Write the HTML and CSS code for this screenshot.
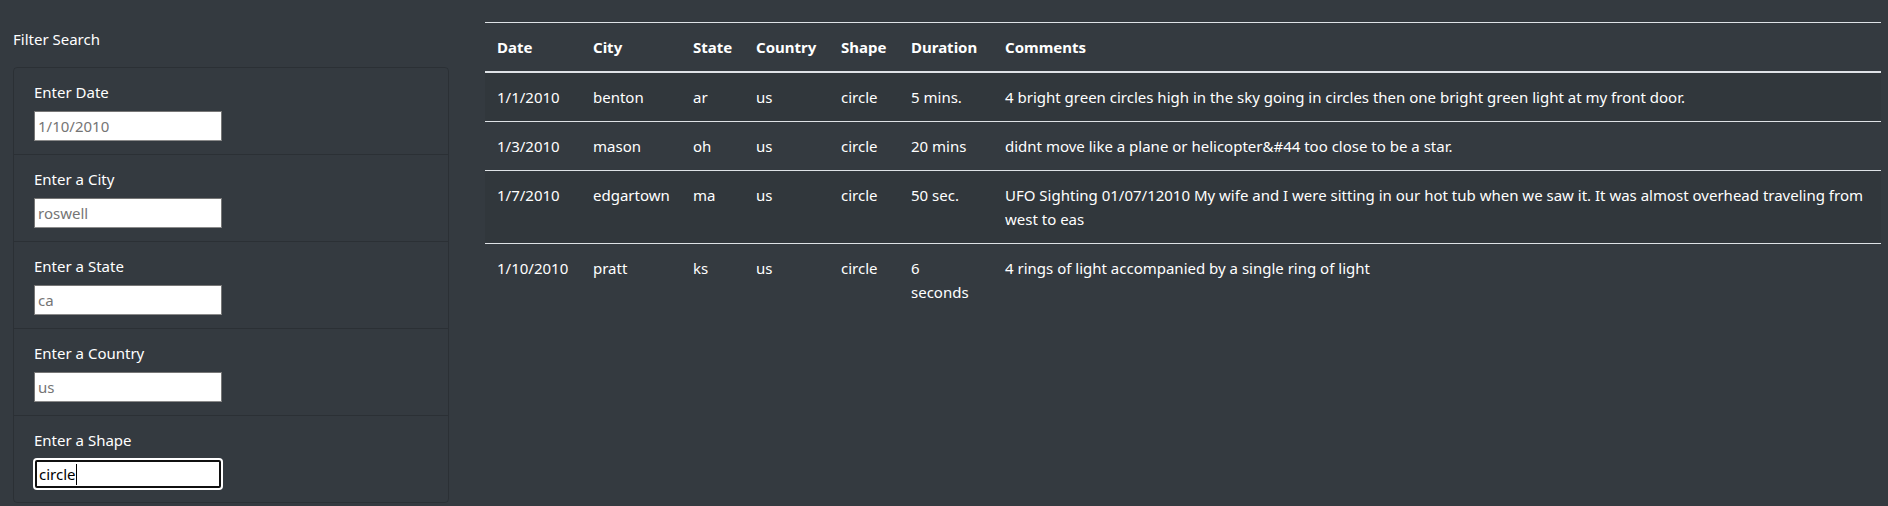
FILE: index.html
```html
<!DOCTYPE html>
<html lang="en">
<head>
<meta charset="utf-8">
<title>UFO Sightings</title>
<link rel="stylesheet" href="styles.css">
</head>
<body>
<div class="page">
  <aside class="filters">
    <p class="filters-title">Filter Search</p>
    <ul class="filter-list">
      <li class="filter-item">
        <label class="filter-label" for="date">Enter Date</label>
        <input class="filter-input" id="date" type="text" placeholder="1/10/2010">
      </li>
      <li class="filter-item">
        <label class="filter-label" for="city">Enter a City</label>
        <input class="filter-input" id="city" type="text" placeholder="roswell">
      </li>
      <li class="filter-item">
        <label class="filter-label" for="state">Enter a State</label>
        <input class="filter-input" id="state" type="text" placeholder="ca">
      </li>
      <li class="filter-item">
        <label class="filter-label" for="country">Enter a Country</label>
        <input class="filter-input" id="country" type="text" placeholder="us">
      </li>
      <li class="filter-item">
        <label class="filter-label" for="shape">Enter a Shape</label>
        <div class="filter-input focused" id="shape"><span>circle</span><span class="caret"></span></div>
      </li>
    </ul>
  </aside>
  <main class="results">
    <table class="ufo-table">
      <colgroup>
        <col class="c-date"><col class="c-city"><col class="c-state"><col class="c-country"><col class="c-shape"><col class="c-duration"><col class="c-comments">
      </colgroup>
      <thead>
        <tr><th>Date</th><th>City</th><th>State</th><th>Country</th><th>Shape</th><th>Duration</th><th>Comments</th></tr>
      </thead>
      <tbody>
        <tr><td>1/1/2010</td><td>benton</td><td>ar</td><td>us</td><td>circle</td><td>5 mins.</td><td>4 bright green circles high in the sky going in circles then one bright green light at my front door.</td></tr>
        <tr><td>1/3/2010</td><td>mason</td><td>oh</td><td>us</td><td>circle</td><td>20 mins</td><td>didnt move like a plane or helicopter&amp;#44 too close to be a star.</td></tr>
        <tr><td>1/7/2010</td><td>edgartown</td><td>ma</td><td>us</td><td>circle</td><td>50 sec.</td><td>UFO Sighting 01/07/12010 My wife and I were sitting in our hot tub when we saw it. It was almost overhead traveling from west to eas</td></tr>
        <tr><td>1/10/2010</td><td>pratt</td><td>ks</td><td>us</td><td>circle</td><td>6 seconds</td><td>4 rings of light accompanied by a single ring of light</td></tr>
      </tbody>
    </table>
  </main>
</div>
</body>
</html>
```
FILE: styles.css
```css
html, body {
  margin: 0;
  padding: 0;
  background: #343a40;
  color: #fff;
  font-family: "Noto Sans", Lato, "Liberation Sans", sans-serif;
  font-size: 15px;
  line-height: 24px;
}

.page {
  display: flex;
  align-items: flex-start;
  gap: 36px;
  padding: 0 7px 0 13px;
  height: 506px;
  overflow: hidden;
}

.filters {
  width: 436px;
  flex: none;
  padding-top: 27px;
}

.filters-title {
  margin: 0 0 16px;
}

.filter-list {
  list-style: none;
  margin: 0;
  padding: 0;
  border: 1px solid rgba(0, 0, 0, 0.16);
  border-radius: 4px;
}

.filter-item {
  padding: 12px 20px 13px;
  border-top: 1px solid rgba(0, 0, 0, 0.16);
  display: flex;
  flex-direction: column;
  align-items: flex-start;
}

.filter-item:first-child {
  border-top: 0;
}

.filter-label {
  margin-bottom: 7px;
}

.filter-input {
  box-sizing: border-box;
  width: 188px;
  height: 30px;
  margin: 0;
  padding: 1px 3px;
  border: 1px solid #767676;
  border-bottom-color: #8a8a8a;
  background: #fff;
  color: #000;
  font: inherit;
  line-height: 26px;
  outline: none;
}

.filter-input::placeholder {
  color: #757575;
}

.filter-input.focused {
  display: flex;
  align-items: center;
  border: 1px solid #fff;
  outline: 2px solid #101010;
  outline-offset: -3px;
  border-radius: 3px;
  padding: 0 4px;
  box-shadow: 0 0 0 1px #fff;
}

.caret {
  display: inline-block;
  width: 1px;
  height: 21px;
  background: #000;
}

.results {
  flex: 1;
  padding-top: 22px;
}

.ufo-table {
  width: 100%;
  border-collapse: collapse;
  table-layout: fixed;
}

.c-date { width: 96px; }
.c-city { width: 100px; }
.c-state { width: 63px; }
.c-country { width: 85px; }
.c-shape { width: 70px; }
.c-duration { width: 94px; }

.ufo-table th,
.ufo-table td {
  padding: 12px;
  text-align: left;
  vertical-align: top;
  border-top: 1px solid #dee2e6;
}

.ufo-table th {
  font-weight: 700;
  border-bottom: 2px solid #dee2e6;
}

.ufo-table tbody tr:nth-child(odd) {
  background: rgba(0, 0, 0, 0.05);
}
```
